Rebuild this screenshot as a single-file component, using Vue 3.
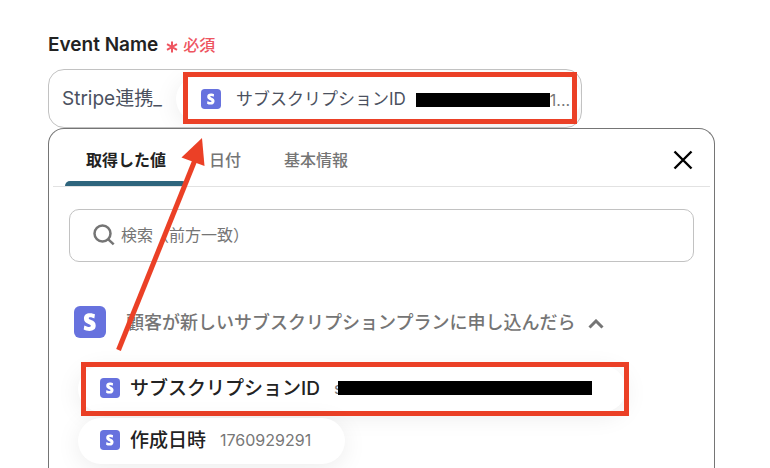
<script setup>
import { ref, h } from 'vue'

const eventName = ref('Stripe連携_')
const query = ref('')
const active = ref(0)
const open = ref(true)
const tabs = ['取得した値', '日付', '基本情報']

const StripeLogo = () =>
  h('svg', { viewBox: '0 0 32 32', 'aria-hidden': 'true' }, [
    h('rect', { width: 32, height: 32, rx: 6, fill: '#6772de' }),
    h('path', {
      transform: 'translate(7.3 7.2) scale(.7 .74)',
      fill: '#fff',
      d: 'M13.976 9.15c-2.172-.806-3.356-1.426-3.356-2.409 0-.831.683-1.305 1.901-1.305 2.227 0 4.515.858 6.09 1.631l.89-5.494C18.252.975 15.697 0 12.165 0 9.667 0 7.589.654 6.104 1.872 4.56 3.147 3.757 4.992 3.757 7.218c0 4.039 2.467 5.76 6.476 7.219 2.585.92 3.445 1.574 3.445 2.583 0 .98-.84 1.545-2.354 1.545-1.875 0-4.965-.921-6.99-2.109l-.9 5.555C5.175 22.99 8.385 24 11.714 24c2.641 0 4.843-.624 6.328-1.813 1.664-1.305 2.525-3.236 2.525-5.732 0-4.128-2.524-5.851-6.594-7.305h.003z'
    })
  ])
</script>

<template>
  <main class="page">
    <label class="label" for="event-name">
      <span>Event Name</span>
      <svg class="star" viewBox="0 0 12 12" aria-hidden="true">
        <path d="M6 0.5v11M1 3.200l10 5.600M11 3.200L1 8.800" />
      </svg>
      <span class="required">必須</span>
    </label>

    <div class="field-wrap">
      <div class="field">
        <input id="event-name" v-model="eventName" class="name-input" type="text" />
        <div class="chip">
          <StripeLogo class="logo-small" />
          <span class="chip-name">サブスクリプションID</span>
          <span class="chip-value"><i class="mask"></i>1...</span>
        </div>
      </div>
      <div class="mark mark-field"></div>
    </div>

    <section class="panel">
      <header class="head">
        <div class="tabs" role="tablist">
          <button
            v-for="(tab, i) in tabs"
            :key="tab"
            type="button"
            role="tab"
            class="tab"
            :class="{ active: active === i }"
            :aria-selected="active === i"
            @click="active = i"
          >{{ tab }}</button>
        </div>
        <button type="button" class="close" aria-label="閉じる">
          <svg viewBox="0 0 20 20" aria-hidden="true"><path d="M1.500 1.500l17 17M18.500 1.500l-17 17" /></svg>
        </button>
      </header>

      <label class="search">
        <svg class="search-icon" viewBox="0 0 22 22" aria-hidden="true">
          <circle cx="9.500" cy="9.500" r="8" />
          <path d="M15.300 15.300l5.400 5" />
        </svg>
        <input v-model="query" type="text" placeholder="検索（前方一致）" aria-label="検索" />
      </label>

      <button type="button" class="group" :aria-expanded="open" @click="open = !open">
        <StripeLogo class="logo-large" />
        <span class="group-title">顧客が新しいサブスクリプションプランに申し込んだら</span>
        <svg class="chevron" viewBox="0 0 16 10" aria-hidden="true"><path d="M1.500 8.500L8 2l6.500 6.500" /></svg>
      </button>

      <ul v-if="open" class="items">
        <li>
          <button type="button" class="item">
            <StripeLogo class="logo-small" />
            <span class="item-name">サブスクリプションID</span>
            <span class="item-value">s<i class="mask mask-long"></i></span>
          </button>
          <div class="mark mark-item"></div>
        </li>
        <li>
          <button type="button" class="item">
            <StripeLogo class="logo-small" />
            <span class="item-name">作成日時</span>
            <span class="item-value">1760929291</span>
          </button>
        </li>
      </ul>
    </section>

    <svg class="arrow" viewBox="0 0 92 216" aria-hidden="true">
      <path class="shaft" d="M4.500 212L81 22" />
      <path class="tip" d="M88 0L67.500 19.500L90.500 28z" />
    </svg>
  </main>
</template>

<style>
body {
  background: #fff;
}
</style>

<style scoped>
* {
  box-sizing: border-box;
}
.page {
  position: relative;
  display: flex;
  flex-direction: column;
  height: 100vh;
  padding: 33px 55px 0 48px;
  overflow: hidden;
  color: #222;
  font-family: Inter, "Noto Sans CJK JP", sans-serif;
}
button,
input {
  margin: 0;
  padding: 0;
  border: 0;
  background: none;
  color: inherit;
  font: inherit;
  outline: 0;
}
.label {
  display: flex;
  align-items: center;
  height: 24px;
  margin-bottom: 12px;
  font-size: 19px;
  font-weight: 600;
  line-height: 24px;
}
.star {
  width: 12px;
  height: 12px;
  margin: 3px 5px 0 8px;
  fill: none;
  stroke: #ee5560;
  stroke-width: 2;
}
.required {
  color: #ee5560;
  font-size: 16px;
  font-weight: 500;
}
.field-wrap {
  position: relative;
  flex: none;
  width: 80%;
}
.field {
  display: flex;
  align-items: center;
  height: 59px;
  padding-left: 13px;
  border: 1px solid #c2c2c2;
  border-radius: 16px;
  overflow: hidden;
  color: #4b5160;
  font-size: 19px;
}
.name-input {
  flex: none;
  width: 114px;
  height: 30px;
  padding-bottom: 4px;
}
.chip {
  display: flex;
  flex: 1;
  align-items: center;
  min-width: 0;
  height: 46px;
  padding-left: 25px;
  border-radius: 23px;
  background: #fff;
  box-shadow: 0 4px 24px rgba(0, 0, 0, 0.08);
  white-space: nowrap;
}
.logo-small {
  flex: none;
  width: 20px;
  height: 20px;
}
.chip-name {
  margin-left: 15px;
  padding-bottom: 3px;
  font-size: 17px;
}
.chip-value {
  display: flex;
  align-items: center;
  margin-left: 10px;
  padding-top: 2px;
  color: #777;
  font-size: 16px;
}
.mask {
  width: 134px;
  height: 14px;
  background: #000;
}
.mask-long {
  width: 254px;
  margin-left: -4px;
}
.mark {
  position: absolute;
  border: 5px solid #eb4026;
  pointer-events: none;
}
.mark-field {
  inset: 3px 5px 4px 135px;
}
.mark-item {
  inset: -4px -3px -4px 3px;
}
.panel {
  flex: 1;
  border: 1px solid #757575;
  border-bottom: 0;
  border-radius: 16px 16px 0 0;
  background: #fff;
}
.head {
  display: flex;
  justify-content: space-between;
  height: 58px;
  margin: 0 4px;
  padding: 0 17px 0 12px;
  border-bottom: 1px solid #e2e2e2;
}
.tabs {
  display: flex;
  gap: 1px;
}
.tab {
  position: relative;
  height: 57px;
  padding: 2px 21px 0;
  color: #757575;
  font-size: 16px;
  font-weight: 500;
}
.tab.active {
  color: #222;
  font-weight: 700;
}
.tab.active::after {
  content: "";
  position: absolute;
  inset: auto 0 0;
  height: 5px;
  border-radius: 5px 5px 0 0;
  background: #2e657d;
}
.close {
  align-self: center;
  width: 20px;
  height: 26px;
}
.close svg {
  display: block;
  width: 20px;
  margin-top: 5px;
  fill: none;
  stroke: #000;
  stroke-width: 2.4;
}
.search {
  display: flex;
  align-items: center;
  gap: 6px;
  height: 53px;
  margin: 22px 20px 0;
  padding: 0 23px 2px;
  border: 1px solid #c2c2c2;
  border-radius: 10px;
}
.search-icon {
  width: 22px;
  height: 22px;
  fill: none;
  stroke: #757575;
  stroke-width: 2.5;
}
.search input {
  flex: 1;
  min-width: 0;
  height: 30px;
  font-size: 16px;
}
.search input::placeholder {
  color: #757575;
  opacity: 1;
}
.group {
  display: flex;
  align-items: center;
  height: 32px;
  margin: 44px 25px 0;
  color: #757575;
  font-size: 18px;
  font-weight: 500;
  white-space: nowrap;
}
.logo-large {
  width: 32px;
  height: 32px;
}
.group-title {
  margin-left: 20px;
  padding-bottom: 2px;
}
.chevron {
  width: 16px;
  height: 10px;
  margin: 3px 0 0 13px;
  fill: none;
  stroke: #757575;
  stroke-width: 3;
}
.items {
  display: flex;
  flex-direction: column;
  align-items: flex-start;
  gap: 6px;
  margin: 28px 29px 0;
  padding: 0;
  list-style: none;
}
.items li {
  position: relative;
}
.item {
  display: flex;
  align-items: center;
  height: 46px;
  padding: 0 34px 2px 22px;
  border-radius: 23px;
  background: #fff;
  box-shadow: 0 4px 24px rgba(0, 0, 0, 0.08);
  white-space: nowrap;
}
.item-name {
  margin-left: 10px;
  padding-bottom: 3px;
  font-size: 19px;
  font-weight: 500;
}
.item-value {
  display: flex;
  align-items: center;
  margin-left: 14px;
  color: #777;
  font-size: 16px;
}
.arrow {
  position: absolute;
  top: 138px;
  left: 114px;
  width: 92px;
  height: 216px;
  pointer-events: none;
}
.shaft {
  fill: none;
  stroke: #eb4026;
  stroke-width: 5;
}
.tip {
  fill: #eb4026;
}
</style>
